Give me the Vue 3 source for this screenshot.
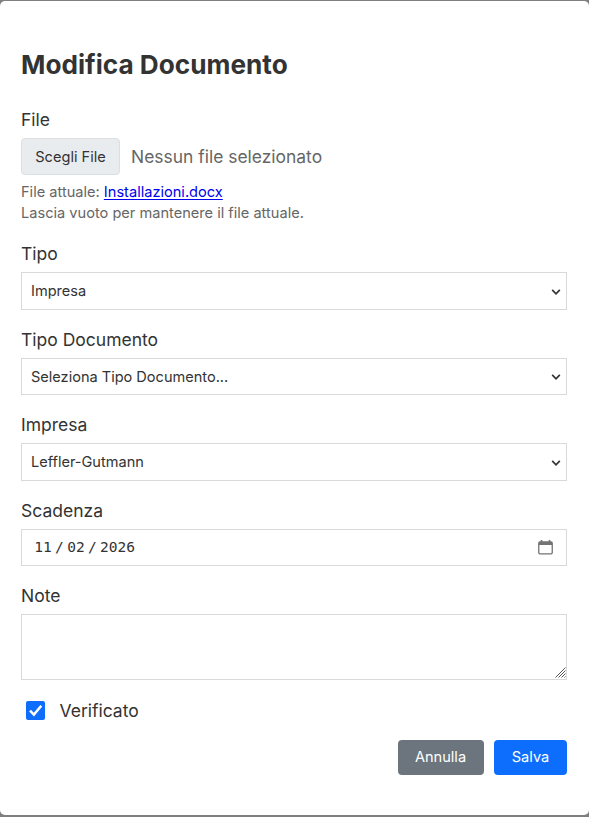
<script setup>
import { ref } from 'vue';

const form = ref({
  tipo: 'Impresa',
  tipoDocumento: '',
  impresa: 'Leffler-Gutmann',
  scadenza: ['11', '02', '2026'],
  note: '',
  verificato: true
});

const selects = [
  { key: 'tipo', label: 'Tipo', options: [{ value: 'Impresa', text: 'Impresa' }] },
  { key: 'tipoDocumento', label: 'Tipo Documento', options: [{ value: '', text: 'Seleziona Tipo Documento...' }] },
  { key: 'impresa', label: 'Impresa', options: [{ value: 'Leffler-Gutmann', text: 'Leffler-Gutmann' }] }
];
</script>

<template>
  <div class="modal-overlay">
    <form class="modal-content" @submit.prevent>
      <h2 class="modal-title">Modifica Documento</h2>

      <div class="form-group file-group">
        <label class="form-label">File</label>
        <div class="file-input">
          <button type="button" class="file-btn">Scegli File</button>
          <span class="file-name">Nessun file selezionato</span>
        </div>
        <div class="file-hint">
          <div>File attuale: <a href="#">Installazioni.docx</a></div>
          <div>Lascia vuoto per mantenere il file attuale.</div>
        </div>
      </div>

      <div v-for="field in selects" :key="field.key" class="form-group">
        <label class="form-label" :for="field.key">{{ field.label }}</label>
        <div class="select-wrapper">
          <select :id="field.key" v-model="form[field.key]" class="form-control">
            <option v-for="opt in field.options" :key="opt.value" :value="opt.value">{{ opt.text }}</option>
          </select>
          <svg class="select-arrow" width="10" height="8" viewBox="0 0 10 8">
            <path d="M1.2 1.8 L5 5.8 L8.8 1.8" fill="none" stroke="#333" stroke-width="1.7" />
          </svg>
        </div>
      </div>

      <div class="form-group">
        <label class="form-label">Scadenza</label>
        <div class="form-control date-control">
          <div class="date-value">
            <span>{{ form.scadenza[0] }}</span>
            <span class="date-sep">/</span>
            <span>{{ form.scadenza[1] }}</span>
            <span class="date-sep">/</span>
            <span>{{ form.scadenza[2] }}</span>
          </div>
          <svg class="date-icon" width="15" height="15" viewBox="0 0 15 15">
            <path d="M2.700 0h1.600v1.300h6.400V0h1.600v1.300h0.700A1.900 1.900 0 0 1 14.900 3.200v9.400A1.900 1.900 0 0 1 13 14.500H2A1.900 1.900 0 0 1 0.100 12.600V3.200A1.900 1.900 0 0 1 2 1.300h0.700z M1.400 5v7.500a0.700 0.700 0 0 0 0.700 0.700h10.800a0.700 0.700 0 0 0 0.700-0.700V5z" fill="#737373" fill-rule="evenodd" />
          </svg>
        </div>
      </div>

      <div class="form-group">
        <label class="form-label" for="note">Note</label>
        <div class="textarea-wrapper">
          <textarea id="note" v-model="form.note" class="form-control form-textarea"></textarea>
          <svg class="resize-grip" width="11" height="11" viewBox="0 0 11 11">
            <path d="M0.500 10.500 L10.500 0.500 M3.500 10.500 L10.500 3.500 M6.500 10.500 L10.500 6.500 M9.500 10.500 L10.500 9.500" stroke="#555" stroke-width="1" />
          </svg>
        </div>
      </div>

      <label class="check-row">
        <input v-model="form.verificato" type="checkbox" class="check-input" />
        <span class="check-box">
          <svg v-if="form.verificato" width="19" height="19" viewBox="0 0 19 19">
            <path d="M4 9.700 L7.900 13.600 L15.300 4.800" fill="none" stroke="#fff" stroke-width="2.500" />
          </svg>
        </span>
        <span>Verificato</span>
      </label>

      <div class="modal-actions">
        <button type="button" class="btn btn-secondary">Annulla</button>
        <button type="submit" class="btn btn-primary">Salva</button>
      </div>
    </form>
  </div>
</template>

<style>
body {
  margin: 0;
  background: #7f7f7f;
}
</style>

<style scoped>
.modal-overlay {
  box-sizing: border-box;
  height: 817px;
  padding: 1px 0 2px;
  background: #7f7f7f;
  overflow: hidden;
}

.modal-content {
  box-sizing: border-box;
  height: 814px;
  padding: 43.5px 22px 0 21px;
  background: #fff;
  border-radius: 5px;
  color: #333;
  font-family: Inter, sans-serif;
  font-size: 17.5px;
  line-height: 26.4px;
}

.modal-title {
  margin: 0 0 22.38px;
  font-size: 26.2px;
  font-weight: 700;
  line-height: 40px;
}

.form-group {
  margin-bottom: 16.95px;
}

.form-label {
  display: block;
  margin-bottom: 4.8px;
}

.file-group {
  height: 117.2px;
}

.file-input {
  display: flex;
  align-items: center;
  gap: 11px;
  height: 37px;
}

.file-btn {
  box-sizing: border-box;
  width: 99px;
  height: 37px;
  padding: 1px 0 0;
  border: 1px solid #dcdfe2;
  border-radius: 4px;
  background: #e9ecef;
  color: #333;
  font-family: inherit;
  font-size: 14.58px;
}

.file-name {
  padding-top: 1px;
  color: #666;
  font-size: 17.45px;
}

.file-hint {
  margin-top: 7px;
  color: #666;
  font-size: 14.6px;
  line-height: 21px;
}

.file-hint a {
  color: #0000ee;
  text-underline-offset: 2px;
}

.form-control {
  display: block;
  box-sizing: border-box;
  width: 100%;
  height: 37.4px;
  padding: 0.3px 9px 0;
  border: 1px solid #d9d9d9;
  border-radius: 0;
  background: #fff;
  color: #333;
  font-family: inherit;
  font-size: 14.55px;
  outline: none;
  appearance: none;
}

.select-wrapper,
.textarea-wrapper {
  position: relative;
}

.select-arrow {
  position: absolute;
  right: 6px;
  top: 15.500px;
  pointer-events: none;
}

.date-control {
  display: flex;
  align-items: center;
  justify-content: space-between;
  padding: 0 13px 0 12.3px;
  font-family: "DejaVu Sans Mono", monospace;
}

.date-value {
  display: flex;
}

.date-sep {
  width: 15.3px;
  text-align: center;
}

.form-textarea {
  height: 65.6px;
  resize: none;
}

.resize-grip {
  position: absolute;
  right: 1px;
  bottom: 1.500px;
}

.check-row {
  display: flex;
  align-items: center;
  gap: 14.500px;
  padding: 0.9px 0 0 5px;
}

.check-input {
  position: absolute;
  opacity: 0;
}

.check-box {
  width: 19px;
  height: 19px;
  margin-bottom: 1px;
  border-radius: 2px;
  background: #0d6efd;
}

.check-box svg {
  display: block;
}

.modal-actions {
  display: flex;
  justify-content: flex-end;
  gap: 10px;
  margin-top: 16px;
}

.btn {
  height: 35px;
  padding: 0 0 1px;
  border: none;
  border-radius: 4px;
  color: #fff;
  font-family: inherit;
  font-size: 14.58px;
  cursor: pointer;
}

.btn-secondary {
  width: 86px;
  padding-right: 1px;
  background: #6c757d;
}

.btn-primary {
  width: 73px;
  background: #0d6efd;
}
</style>
